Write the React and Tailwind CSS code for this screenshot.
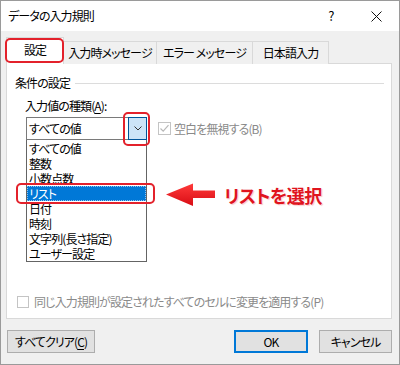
import React from "react";

const font = "font-['Noto_Sans_CJK_JP','Noto_Sans',sans-serif] [font-feature-settings:'palt']";

function Tab({ children, w, selected }) {
  if (selected) {
    return (
      <div className={`relative z-10 h-[27px] ${w} bg-white border border-b-0 border-[#d9d9d9] flex items-center justify-center pb-[2px]`}>
        <span>{children}</span>
        <div className="absolute left-[-2px] right-[-1px] top-0 bottom-[1px] rounded-[5px] border-2 border-[#e3212b]" />
      </div>
    );
  }
  return (
    <div className={`h-[23px] ${w} bg-[#f0f0f0] border border-b-0 border-l-0 border-[#d9d9d9] flex items-center justify-center`}>
      <span>{children}</span>
    </div>
  );
}

function Btn({ children, w, primary }) {
  return (
    <div
      className={`h-[23px] ${w} bg-[#e1e1e1] flex items-center justify-center ${
        primary ? "border-2 border-[#0078d7]" : "border border-[#adadad]"
      }`}
    >
      {children}
    </div>
  );
}

const items = ["すべての値", "整数", "小数点数", "リスト", "日付", "時刻", "文字列(長さ指定)", "ユーザー設定"];

export default function App() {
  return (
    <div className={`${font} text-[12px] leading-[16px] tracking-[-0.9px] text-black w-[400px] h-[365px] bg-[#f0f0f0] border border-[#9a9a9a] flex flex-col overflow-hidden`}>
      {/* Title bar */}
      <div className="h-[30px] shrink-0 bg-white flex items-center pl-[7px]">
        <span className="text-[12px]">データの入力規則</span>
        <div className="ml-auto flex h-full">
          <div className="w-[46px] flex items-center justify-center text-[13px]">?</div>
          <div className="w-[45px] flex items-center justify-center">
            <svg width="11" height="11" viewBox="0 0 11 11">
              <path d="M0.5 0.5 L10.5 10.5 M10.5 0.5 L0.5 10.5" stroke="#111" strokeWidth="1" />
            </svg>
          </div>
        </div>
      </div>

      <div className="flex flex-col pl-[5px] pr-[7px]">
        {/* Tabs */}
        <div className="h-[33px] flex items-end -mb-px relative z-10">
          <Tab w="w-[58px]" selected>設定</Tab>
          <Tab w="w-[93px]">入力時メッセージ</Tab>
          <Tab w="w-[96px]">エラー メッセージ</Tab>
          <Tab w="w-[76px]">日本語入力</Tab>
        </div>

        {/* Panel */}
        <div className="relative h-[256px] bg-white border border-[#d9d9d9] flex flex-col pb-[8px]">
          {/* Group header */}
          <div className="mt-[11px] flex items-center pl-[8px] pr-[7px]">
            <span>条件の設定</span>
            <div className="flex-1 h-px bg-[#dcdcdc] ml-[5px]" />
          </div>

          <div className="mt-[7px] pl-[18px]">
            入力値の種類(<span className="underline underline-offset-2">A</span>):
          </div>

          <div className="mt-[3px] pl-[19px] flex items-start">
            <div className="flex flex-col w-[121px]">
              {/* Combobox */}
              <div className="h-[23px] border border-[#7a7a7a] flex items-center relative">
                <span className="pl-[2px]">すべての値</span>
                <div className="absolute right-[-1px] top-[-1px] bottom-[-1px] w-[19px] bg-[#cce4f7] border border-[#005499] flex items-center justify-center">
                  <svg width="8" height="5" viewBox="0 0 8 5">
                    <path d="M0.5 0.5 L4 4 L7.5 0.5" stroke="#333" strokeWidth="1" fill="none" />
                  </svg>
                  <div className="absolute left-[-6px] right-[-4px] top-[-6px] bottom-[-7px] rounded-[5px] border-2 border-[#e3212b]" />
                </div>
              </div>
              {/* Dropdown list */}
              <div className="border border-t-0 border-[#646464] pt-px">
                {items.map((t) =>
                  t === "リスト" ? (
                    <div key={t} className="relative h-[15px] leading-[15px] bg-[#0078d7] text-white pl-[2px] outline-1 outline-dotted outline-[#8fc1ee] -outline-offset-1">
                      {t}
                      <div className="absolute left-[-11px] right-[-9px] top-[-3px] bottom-[-3px] rounded-[5px] border-2 border-[#e3212b]" />
                    </div>
                  ) : (
                    <div key={t} className="h-[15px] leading-[15px] pl-[2px]">
                      {t}
                    </div>
                  )
                )}
              </div>
            </div>

            <div className="ml-[11px] h-[23px] flex items-center text-[#8a8a8a]">
              <div className="w-[13px] h-[13px] border border-[#c4c4c4] flex items-center justify-center mr-[3px]">
                <svg width="11" height="11" viewBox="0 0 11 11">
                  <path d="M1.5 5.5 L4.2 8.2 L9.5 2.2" stroke="#b8b8b8" strokeWidth="1.2" fill="none" />
                </svg>
              </div>
              <span>空白を無視する(B)</span>
            </div>
          </div>

          {/* Annotation */}
          <div className="absolute left-[159px] top-[119px] flex items-center tracking-normal">
            <svg width="50" height="24" viewBox="0 0 50 24">
              <defs>
                <linearGradient id="ag" x1="0" y1="0" x2="0" y2="1">
                  <stop offset="0" stopColor="#ff3a3a" />
                  <stop offset="1" stopColor="#d80c14" />
                </linearGradient>
              </defs>
              <path d="M0 11.5 L27 0.5 L27 7.5 L49 7.5 L49 15 L27 15 L27 23 Z" fill="url(#ag)" />
            </svg>
            <span className="ml-[8px] text-[18px] leading-[24px] font-bold text-[#e0141e] tracking-[-0.5px] [text-shadow:0_0_2px_#fff,1px_1px_1px_#f7c0c0]">
              リストを選択
            </span>
          </div>

          {/* Bottom checkbox */}
          <div className="mt-auto pl-[10px] flex items-center text-[#8a8a8a]">
            <div className="w-[12px] h-[12px] border border-[#c4c4c4] mr-[5px]" />
            <span>同じ入力規則が設定されたすべてのセルに変更を適用する(P)</span>
          </div>
        </div>

        {/* Buttons */}
        <div className="mt-[11px] flex items-center">
          <div className="ml-[1px]">
            <Btn w="w-[88px]">
              すべてクリア(<span className="underline underline-offset-2">C</span>)
            </Btn>
          </div>
          <div className="ml-auto flex gap-[11px]">
            <Btn w="w-[74px]" primary>OK</Btn>
            <Btn w="w-[73px]">キャンセル</Btn>
          </div>
        </div>
      </div>
    </div>
  );
}
